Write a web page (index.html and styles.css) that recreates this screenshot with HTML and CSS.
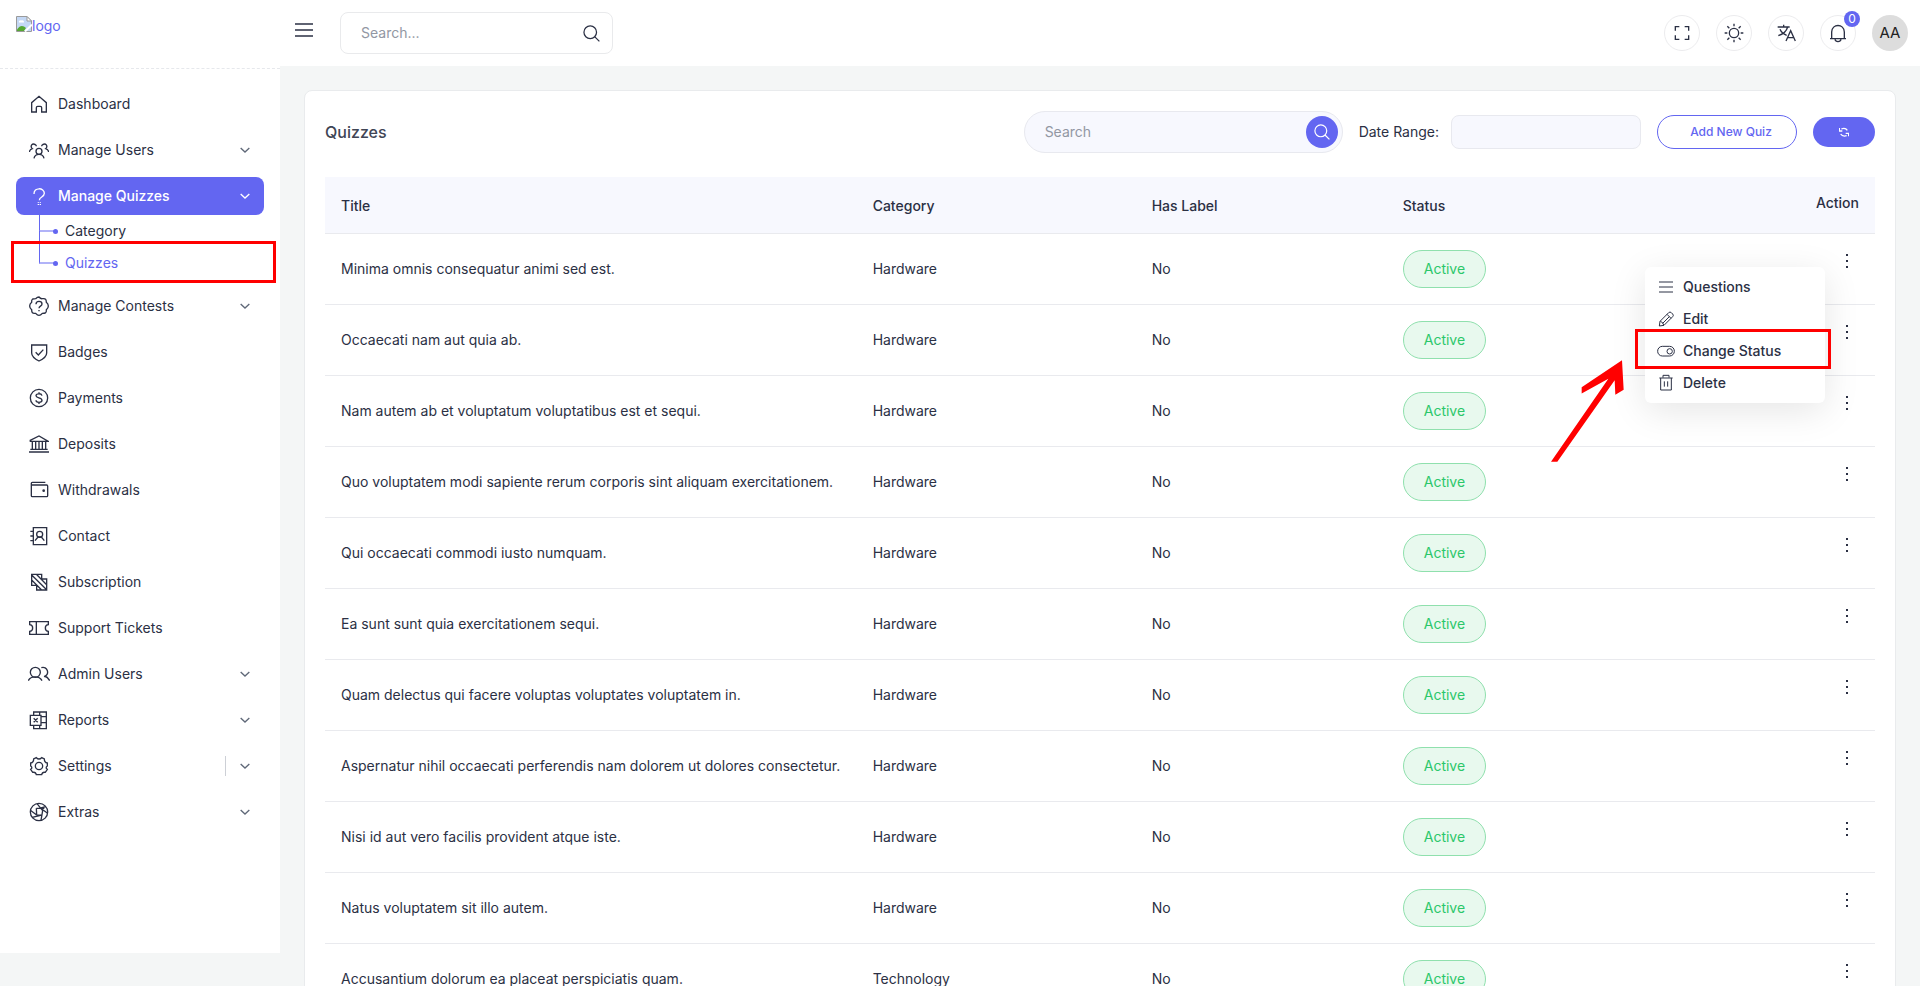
FILE: index.html
```
<!DOCTYPE html>
<html lang="en">
<head>
    <meta charset="UTF-8">
    <meta name="viewport" content="width=device-width, initial-scale=1.0">
    <title>Quizzes</title>
    <link rel="stylesheet" href="styles.css">
</head>
<body>
    <svg class="sprite" aria-hidden="true">
        <symbol id="chevron" viewBox="0 0 30 18"><path d="M2 3l13 12L28 3"/></symbol>
        <symbol id="search" viewBox="0 0 54 54"><circle cx="23" cy="23" r="20"/><path d="M37 37l15 15"/></symbol>
        <symbol id="bars" viewBox="0 0 54 42"><path d="M0 3h54M0 21h54M0 39h54"/></symbol>
    </svg>
    <aside class="sidebar">
        <div class="brand">
            <a href="#">
                <svg class="broken" viewBox="0 0 16 16">
                    <path d="M0.500 .500H11L15.500 5V15.500H.500z" fill="#c4d8f5" stroke="#9a9a9a"/>
                    <path d="M11 .500V5h4.500z" fill="#fff" stroke="#9a9a9a"/>
                    <path d="M3 6.500a1.500 1.500 0 0 1 2-2 2 2 0 0 1 3 2z" fill="#fff"/>
                    <path d="M1 15V13.500C4 9 7 9 10 12l-2 3z" fill="#55a832"/>
                    <path d="M9 15.500L16 8.500" stroke="#fff" stroke-width="2"/>
                </svg><span>logo</span>
            </a>
        </div>
        <ul class="menu">
            <li><a href="#"><svg class="icon" viewBox="0 0 60 60"><path d="M8 54V26L30 7l22 19v28H38V41q0-4-4-4h-8q-4 0-4 4v13z"/></svg>Dashboard</a></li>
            <li><a href="#"><svg class="icon" viewBox="0 0 60 60"><circle cx="30" cy="34" r="9"/><path d="M15 55c3-16 27-16 30 0M1 36c1-6 4-9 9-10-8-8 0-18 9-12 2 1 3 3 3 5M59 36c-1-6-4-9-9-10 8-8 0-18-9-12-2 1-3 3-3 5"/></svg>Manage Users<svg class="chevron"><use href="#chevron"/></svg></a></li>
            <li class="open">
                <a href="#"><svg class="icon" viewBox="0 0 60 60"><path d="M15 24C14 3 46 4 46 22c0 12-15 10-15 21M28 48v2M34 48v2M28 54v3M34 54v3"/></svg>Manage Quizzes<svg class="chevron"><use href="#chevron"/></svg></a>
                <ul class="submenu">
                    <li><a href="#">Category</a></li>
                    <li class="current"><a href="#">Quizzes</a></li>
                </ul>
            </li>
            <li><a href="#"><svg class="icon" viewBox="0 0 60 60"><path d="M30 3q5 6 10 5 8-1 10 2 2 3 2 9 6 5 6 11t-6 11q1 8-3 10-3 1-9 1-5 6-10 6t-10-6q-8 1-10-2-2-3-2-9-6-5-6-11t6-11q-1-8 3-10 3-1 9-1 5-5 10-5z"/><path d="M21 25c0-12 18-11 18-1 0 7-9 6-9 13M30 42v4"/></svg>Manage Contests<svg class="chevron"><use href="#chevron"/></svg></a></li>
            <li><a href="#"><svg class="icon" viewBox="0 0 60 60"><path d="M8 9h45v24c0 11-10 18-23 24C18 51 8 44 8 33zM20 31l8 8 15-16"/></svg>Badges</a></li>
            <li><a href="#"><svg class="icon" viewBox="0 0 60 60"><circle cx="30" cy="30" r="26"/><path d="M39 23c-2-8-18-7-18 0 0 8 18 5 18 14 0 8-18 8-18 0M30 13v4M30 43v5"/></svg>Payments</a></li>
            <li><a href="#"><svg class="icon" viewBox="0 0 60 60"><path d="M0 54h60M4 46h52M2 22h56L30 6 2 20M10 23v22M20 23v22M30 23v22M40 23v22M50 23v22"/></svg>Deposits</a></li>
            <li><a href="#"><svg class="icon" viewBox="0 0 60 60"><path d="M49 7H10q-3 0-3 3v37q0 3 3 3h43q3 0 3-3V18q0-3-3-3H7"/><circle class="dot" cx="44" cy="32" r="4"/></svg>Withdrawals</a></li>
            <li><a href="#"><svg class="icon" viewBox="0 0 60 60"><path d="M13 5h40v51H13zM4 16h10M4 30h10M4 44h10"/><circle cx="32" cy="25" r="9"/><path d="M18 44l9-11h10l9 11"/></svg>Contact</a></li>
            <li><a href="#"><svg class="icon" viewBox="0 0 60 60"><path d="M8 7h30v14h15v33H23V40H8zM8 9l45 44M22 7l31 31M8 24l30 30"/></svg>Subscription</a></li>
            <li><a href="#"><svg class="icon" viewBox="0 0 60 60"><path d="M2 11h56v9c-12 1-12 19 0 20v9H2v-9c12-1 12-19 0-20zM22 11v38"/></svg>Support Tickets</a></li>
            <li><a href="#"><svg class="icon wide" viewBox="-3 0 66 60"><circle cx="19" cy="25" r="15"/><path d="M-2 50C5 35 31 35 39 50M37 11c18-6 27 20 8 27M46 36c8 2 12 6 16 14"/></svg>Admin Users<svg class="chevron"><use href="#chevron"/></svg></a></li>
            <li><a href="#"><svg class="icon" viewBox="0 0 60 60"><path d="M14 15V6h38v50H14v-9M32 6v9M32 47v9M38 20h14M38 38h14M4 16h32v30H4zM14 25l12 12M26 25L14 37"/></svg>Reports<svg class="chevron"><use href="#chevron"/></svg></a></li>
            <li class="split"><a href="#"><svg class="icon" viewBox="0 0 60 60"><circle cx="30" cy="30" r="11"/><path d="M22 5q8 8 16 0l8 4q0 11 9 12v9q-7 5 0 10l-6 9q-9-2-11 7H22q-2-9-11-7l-6-9q7-5 0-10v-9q9-1 9-12z"/></svg>Settings<svg class="chevron"><use href="#chevron"/></svg></a></li>
            <li><a href="#"><svg class="icon" viewBox="0 0 60 60"><circle cx="30" cy="30" r="26"/><path d="M24 5l17 21M50 14L30 19M56 34L38 21M36 55l5-29M10 46l28-7M4 25l19 14M22 19l1 20M22 19h24M23 39l14 1"/></svg>Extras<svg class="chevron"><use href="#chevron"/></svg></a></li>
        </ul>
    </aside>
    <div class="page">
        <header class="topbar">
            <button class="toggle" type="button" aria-label="Toggle menu"><svg><use href="#bars"/></svg></button>
            <form class="top-search">
                <input type="text" placeholder="Search..." aria-label="Search menu">
                <button type="button" aria-label="Search"><svg><use href="#search"/></svg></button>
            </form>
            <div class="tools">
                <button class="round" type="button" aria-label="Fullscreen"><svg viewBox="0 0 60 60"><path d="M10 23V11h12M38 11h12v12M50 37v12H38M22 49H10V37"/></svg></button>
                <button class="round" type="button" aria-label="Theme"><svg viewBox="0 0 60 60"><circle cx="30" cy="30" r="14"/><path d="M30 2v8M30 50v8M2 30h8M50 30h8M10 10l6 6M44 44l6 6M10 50l6-6M44 16l6-6"/></svg></button>
                <button class="round" type="button" aria-label="Language"><svg viewBox="0 0 60 60"><path d="M5 12h36M23 5v7M35 12C31 26 20 34 7 38M12 19c4 10 12 15 20 18M30 54l14-31 14 31M35 44h18"/></svg></button>
                <button class="round" type="button" aria-label="Notifications"><svg viewBox="0 0 60 60"><path d="M6 47h48M11 47V27c0-26 38-26 38 0v20M21 49c2 9 16 9 18 0"/></svg><span class="count">0</span></button>
                <button class="round avatar" type="button">AA</button>
            </div>
        </header>
        <main>
            <section class="card">
                <div class="card-head">
                    <h1>Quizzes</h1>
                    <form class="filters">
                        <div class="search">
                            <input type="text" placeholder="Search" aria-label="Search quizzes">
                            <button type="button" aria-label="Search"><svg><use href="#search"/></svg></button>
                        </div>
                        <div class="range">
                            <label for="date-range">Date Range:</label>
                            <input type="text" id="date-range">
                        </div>
                        <button class="add" type="button">Add New Quiz</button>
                        <button class="refresh" type="button" aria-label="Refresh"><svg viewBox="0 0 30 30"><path d="M7 6q12-5 18 4M1 3v9h9M23 26q-12 4-18-5M29 28v-9h-9"/></svg></button>
                    </form>
                </div>
                <table>
                    <colgroup>
                        <col class="col-title">
                        <col class="col-category">
                        <col class="col-label">
                        <col>
                        <col class="col-action">
                    </colgroup>
                    <thead>
                        <tr><th>Title</th><th>Category</th><th>Has Label</th><th>Status</th><th class="action">Action</th></tr>
                    </thead>
                    <tbody>
                        <tr>
                            <td>Minima omnis consequatur animi sed est.</td><td>Hardware</td><td>No</td><td><span class="status">Active</span></td>
                            <td class="action">
                                <div class="dropdown">
                                    <button class="more" type="button" aria-label="Actions"></button>
                                    <ul class="dropdown-menu">
                                        <li><a href="#"><svg viewBox="0 0 54 54"><path d="M6 12h42M6 27h42M6 42h42"/></svg>Questions</a></li>
                                        <li><a href="#"><svg viewBox="0 0 54 54"><path d="M7 48l2-14L35 8q4-4 8 0l4 4q4 4 0 8L21 46zM30 13l12 12M10 34q8 2 10 11M37 20L17 40"/></svg>Edit</a></li>
                                        <li class="marked"><a href="#"><svg viewBox="0 0 54 54"><rect x="2" y="13" width="50" height="29" rx="14"/><circle cx="38" cy="28" r="8"/></svg>Change Status</a></li>
                                        <li><a href="#"><svg viewBox="0 0 54 54"><path d="M7 12h40M18 11V4h18v7M11 12v36h32V12M22 22v16M32 22v16"/></svg>Delete</a></li>
                                    </ul>
                                    <svg class="arrow" viewBox="0 0 219 305"><path d="M0 305L172 56L92 100V81L213 0L218 89L193 104L191 60L19 305z"/></svg>
                                </div>
                            </td>
                        </tr>
                        <tr><td>Occaecati nam aut quia ab.</td><td>Hardware</td><td>No</td><td><span class="status">Active</span></td><td class="action"><button class="more" type="button" aria-label="Actions"></button></td></tr>
                        <tr><td>Nam autem ab et voluptatum voluptatibus est et sequi.</td><td>Hardware</td><td>No</td><td><span class="status">Active</span></td><td class="action"><button class="more" type="button" aria-label="Actions"></button></td></tr>
                        <tr><td>Quo voluptatem modi sapiente rerum corporis sint aliquam exercitationem.</td><td>Hardware</td><td>No</td><td><span class="status">Active</span></td><td class="action"><button class="more" type="button" aria-label="Actions"></button></td></tr>
                        <tr><td>Qui occaecati commodi iusto numquam.</td><td>Hardware</td><td>No</td><td><span class="status">Active</span></td><td class="action"><button class="more" type="button" aria-label="Actions"></button></td></tr>
                        <tr><td>Ea sunt sunt quia exercitationem sequi.</td><td>Hardware</td><td>No</td><td><span class="status">Active</span></td><td class="action"><button class="more" type="button" aria-label="Actions"></button></td></tr>
                        <tr><td>Quam delectus qui facere voluptas voluptates voluptatem in.</td><td>Hardware</td><td>No</td><td><span class="status">Active</span></td><td class="action"><button class="more" type="button" aria-label="Actions"></button></td></tr>
                        <tr><td>Aspernatur nihil occaecati perferendis nam dolorem ut dolores consectetur.</td><td>Hardware</td><td>No</td><td><span class="status">Active</span></td><td class="action"><button class="more" type="button" aria-label="Actions"></button></td></tr>
                        <tr><td>Nisi id aut vero facilis provident atque iste.</td><td>Hardware</td><td>No</td><td><span class="status">Active</span></td><td class="action"><button class="more" type="button" aria-label="Actions"></button></td></tr>
                        <tr><td>Natus voluptatem sit illo autem.</td><td>Hardware</td><td>No</td><td><span class="status">Active</span></td><td class="action"><button class="more" type="button" aria-label="Actions"></button></td></tr>
                        <tr><td>Accusantium dolorum ea placeat perspiciatis quam.</td><td>Technology</td><td>No</td><td><span class="status">Active</span></td><td class="action"><button class="more" type="button" aria-label="Actions"></button></td></tr>
                    </tbody>
                </table>
            </section>
        </main>
    </div>
</body>
</html>
```
FILE: styles.css
```
*, *::before, *::after {
    box-sizing: border-box;
}
body {
    display: flex;
    height: 100vh;
    margin: 0;
    overflow: hidden;
    background-color: #f4f6f6;
    color: #2b3044;
    font-family: Inter, "Liberation Sans", sans-serif;
    font-size: 14px;
    line-height: 20px;
}
a {
    color: inherit;
    text-decoration: none;
}
ul {
    list-style: none;
    margin: 0;
    padding: 0;
}
button, input {
    font: inherit;
    color: inherit;
    margin: 0;
    padding: 0;
    border: 0;
    background: none;
    outline: none;
}
button {
    cursor: pointer;
}
input::placeholder {
    color: #9297a3;
    opacity: 1;
}
svg {
    display: block;
    fill: none;
    stroke: currentColor;
    stroke-width: 4;
}
.sprite {
    position: absolute;
    width: 0;
    height: 0;
}

/* sidebar */
.sidebar {
    flex: none;
    width: 280px;
    height: calc(100vh - 33px);
    background-color: #fff;
}
.brand {
    height: 69px;
    padding: 16px;
    border-bottom: 1px dashed #e6e8ec;
    color: #6366f1;
}
.brand a {
    display: flex;
}
.broken {
    width: 16px;
    height: 16px;
    stroke: none;
    stroke-width: 1;
}
.menu {
    display: flex;
    flex-direction: column;
    gap: 8px;
    padding: 16px;
}
.menu > li > a {
    display: flex;
    align-items: center;
    gap: 9px;
    height: 38px;
    padding: 0 14px 0 13px;
    border-radius: 8px;
}
.icon {
    width: 20px;
    height: 20px;
}
.icon.wide {
    width: 22px;
    margin: 0 -1px;
}
.icon .dot {
    fill: currentColor;
    stroke: none;
}
.chevron {
    width: 10px;
    height: 6px;
    margin-left: auto;
    color: #5f6878;
}
.menu .open > a {
    background-color: #6366f1;
    color: #fff;
    font-weight: 500;
}
.open .chevron {
    color: #fff;
}
.split > a {
    position: relative;
}
.split > a::after {
    content: "";
    position: absolute;
    right: 38px;
    width: 1px;
    height: 20px;
    background-color: #cdd0d6;
}
.submenu li {
    position: relative;
    height: 32px;
    padding: 6px 0 6px 49px;
}
.submenu li::before {
    content: "";
    position: absolute;
    left: 23px;
    top: 0;
    width: 17px;
    height: 17px;
    border-left: 1px solid #6366f1;
    border-bottom: 2px solid #b1b3f8;
}
.submenu .current::before {
    top: -16px;
    height: 33px;
}
.submenu li a::before {
    content: "";
    position: absolute;
    left: 37px;
    top: 14px;
    width: 5px;
    height: 5px;
    border-radius: 50%;
    background-color: #6366f1;
}
.submenu .current {
    color: #6366f1;
}
.submenu .current::after {
    content: "";
    position: absolute;
    left: -5px;
    right: -12px;
    top: -6px;
    height: 42px;
    border: 3px solid #f00;
}

/* top bar */
.page {
    display: flex;
    flex: 1;
    flex-direction: column;
    min-width: 0;
}
.topbar {
    display: flex;
    flex: none;
    align-items: center;
    height: 66px;
    padding: 0 12px 0 15px;
    background-color: #fff;
}
.toggle {
    margin: 0 27px 6px 0;
}
.toggle svg {
    width: 18px;
    height: 14px;
}
.top-search {
    display: flex;
    align-items: center;
    width: 273px;
    height: 42px;
    padding: 0 12px 0 20px;
    border: 1px solid #e9eaec;
    border-radius: 8px;
}
.top-search input {
    flex: 1;
    min-width: 0;
}
.top-search svg {
    width: 17px;
    height: 17px;
}
.tools {
    display: flex;
    gap: 16px;
    margin-left: auto;
}
.round {
    position: relative;
    display: flex;
    align-items: center;
    justify-content: center;
    width: 36px;
    height: 36px;
    border: 1px solid #ececee;
    border-radius: 50%;
}
.round svg {
    width: 20px;
    height: 20px;
}
.count {
    position: absolute;
    top: -5px;
    right: -5px;
    width: 16px;
    border-radius: 50%;
    background-color: #6366f1;
    color: #fff;
    font-size: 12px;
    line-height: 16px;
}
.avatar {
    border: 0;
    background-color: #ddd;
    color: #222;
    font-size: 15px;
}

/* quizzes card */
main {
    flex: 1;
    min-height: 0;
    padding: 24px;
    overflow-y: auto;
    scrollbar-width: none;
}
.card {
    padding: 20px;
    border: 1px solid #e9ebed;
    border-radius: 8px;
    background-color: #fff;
}
.card-head {
    display: flex;
    align-items: center;
    justify-content: space-between;
    margin-bottom: 24px;
}
h1 {
    margin: 0;
    color: #3f4555;
    font-size: 16px;
    font-weight: 500;
}
.filters {
    display: flex;
    align-items: center;
    gap: 16px;
}
.search {
    display: flex;
    align-items: center;
    width: 319px;
    height: 42px;
    padding: 0 4px 0 20px;
    border: 1px solid #e8e9ef;
    border-radius: 21px;
    background-color: #f7f8fe;
}
.search input {
    flex: 1;
    min-width: 0;
}
.search button {
    display: flex;
    align-items: center;
    justify-content: center;
    width: 32px;
    height: 32px;
    border-radius: 50%;
    background-color: #6366f1;
    color: #fff;
}
.search svg {
    width: 16px;
    height: 16px;
}
.range {
    display: flex;
    align-items: center;
    gap: 12px;
}
.range input {
    width: 190px;
    height: 34px;
    padding: 0 12px;
    border: 1px solid #e8e9ef;
    border-radius: 8px;
    background-color: #f7f8fe;
}
.add {
    width: 140px;
    height: 34px;
    padding-left: 8px;
    border: 1px solid #6366f1;
    border-radius: 17px;
    color: #6366f1;
    font-size: 12px;
    font-weight: 500;
}
.refresh {
    display: flex;
    align-items: center;
    justify-content: center;
    width: 62px;
    height: 30px;
    border-radius: 15px;
    background-color: #6366f1;
    color: #fff;
}
.refresh svg {
    width: 10px;
    height: 10px;
}
table {
    width: 100%;
    table-layout: fixed;
    border-collapse: separate;
    border-spacing: 0;
}
.col-title {
    width: 34.3%;
}
.col-category {
    width: 18%;
}
.col-label {
    width: 16.2%;
}
.col-action {
    width: 10%;
}
th, td {
    height: 71px;
    padding: 0 0 0 16px;
    border-bottom: 1px solid #e9eaee;
    text-align: left;
}
th {
    height: 57px;
    padding-top: 2px;
    background-color: #f7f8fe;
    font-weight: 500;
}
.status {
    display: inline-block;
    padding: 8px 20px;
    border: 1px solid #8fe0ad;
    border-radius: 19px;
    background-color: #e8f9ee;
    color: #2cc76a;
}
.action {
    padding: 16px 16px 0 0;
    text-align: right;
    vertical-align: top;
}
.dropdown {
    position: relative;
}
.more {
    display: block;
    width: 24px;
    height: 22px;
    margin-left: auto;
    background: linear-gradient(#2b3044, #2b3044) center 4px / 2px 2px no-repeat,
        linear-gradient(#2b3044, #2b3044) center / 2px 2px no-repeat,
        linear-gradient(#2b3044, #2b3044) center 16px / 2px 2px no-repeat;
}
.dropdown-menu {
    position: absolute;
    z-index: 1;
    top: 17px;
    right: 34px;
    width: 180px;
    padding: 4px 0;
    border-radius: 6px;
    background-color: #fff;
    box-shadow: 0 8px 36px rgba(0, 0, 0, 0.1);
    text-align: left;
    font-weight: 500;
}
.dropdown-menu li {
    position: relative;
}
.dropdown-menu a {
    display: flex;
    align-items: center;
    gap: 8px;
    height: 32px;
    padding: 0 12px;
}
.dropdown-menu svg {
    width: 18px;
    height: 18px;
    stroke-width: 3;
}
.marked::after {
    content: "";
    position: absolute;
    top: -6px;
    left: -10px;
    right: -6px;
    height: 40px;
    border: 3px solid #f00;
}
.arrow {
    position: absolute;
    z-index: 2;
    top: 110px;
    right: 235px;
    width: 73px;
    height: 102px;
    fill: #f00;
    stroke: none;
}
```
